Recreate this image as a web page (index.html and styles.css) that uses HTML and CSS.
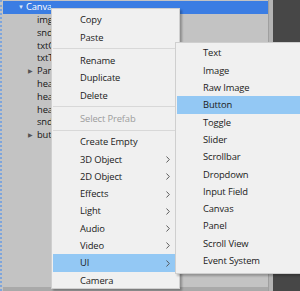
FILE: index.html
```html
<!DOCTYPE html>
<html>
<head>
<meta charset="utf-8">
<link rel="stylesheet" href="styles.css">
</head>
<body>
<div class="screen">
  <div class="hierarchy">
    <div class="tree">
      <div class="row selected"><span class="twisty down">&#9660;</span><span class="name">Canvas</span></div>
      <div class="row child"><span class="name">imgBackground</span></div>
      <div class="row child"><span class="name">sndClick</span></div>
      <div class="row child"><span class="name">txtCount</span></div>
      <div class="row child"><span class="name">txtTitle</span></div>
      <div class="row child"><span class="twisty right">&#9654;</span><span class="name">Panel</span></div>
      <div class="row child"><span class="name">heart1</span></div>
      <div class="row child"><span class="name">heart2</span></div>
      <div class="row child"><span class="name">heart3</span></div>
      <div class="row child"><span class="name">sndWin</span></div>
      <div class="row child"><span class="twisty right">&#9654;</span><span class="name">button</span></div>
    </div>
    <div class="bottom-strip"></div>
  </div>
  <div class="divider"></div>
  <div class="dark-panel"></div>

  <div class="menu main-menu">
    <div class="item">Copy</div>
    <div class="item">Paste</div>
    <div class="sep"></div>
    <div class="item">Rename</div>
    <div class="item">Duplicate</div>
    <div class="item">Delete</div>
    <div class="sep"></div>
    <div class="item disabled">Select Prefab</div>
    <div class="sep"></div>
    <div class="item">Create Empty</div>
    <div class="item">3D Object<svg class="chev" viewBox="0 0 4 7"><path d="M0.5 0.5 L3.3 3.5 L0.5 6.5" /></svg></div>
    <div class="item">2D Object<svg class="chev" viewBox="0 0 4 7"><path d="M0.5 0.5 L3.3 3.5 L0.5 6.5" /></svg></div>
    <div class="item">Effects<svg class="chev" viewBox="0 0 4 7"><path d="M0.5 0.5 L3.3 3.5 L0.5 6.5" /></svg></div>
    <div class="item">Light<svg class="chev" viewBox="0 0 4 7"><path d="M0.5 0.5 L3.3 3.5 L0.5 6.5" /></svg></div>
    <div class="item">Audio<svg class="chev" viewBox="0 0 4 7"><path d="M0.5 0.5 L3.3 3.5 L0.5 6.5" /></svg></div>
    <div class="item">Video<svg class="chev" viewBox="0 0 4 7"><path d="M0.5 0.5 L3.3 3.5 L0.5 6.5" /></svg></div>
    <div class="item active">UI<svg class="chev" viewBox="0 0 4 7"><path d="M0.5 0.5 L3.3 3.5 L0.5 6.5" /></svg></div>
    <div class="item">Camera</div>
  </div>

  <div class="menu sub-menu">
    <div class="item">Text</div>
    <div class="item">Image</div>
    <div class="item">Raw Image</div>
    <div class="item active">Button</div>
    <div class="item">Toggle</div>
    <div class="item">Slider</div>
    <div class="item">Scrollbar</div>
    <div class="item">Dropdown</div>
    <div class="item">Input Field</div>
    <div class="item">Canvas</div>
    <div class="item">Panel</div>
    <div class="item">Scroll View</div>
    <div class="item">Event System</div>
  </div>
</div>
</body>
</html>
```

FILE: styles.css
```css
html, body {
  margin: 0;
  padding: 0;
}

body {
  width: 300px;
  height: 291px;
  overflow: hidden;
  font-family: "Open Sans", "Noto Sans", sans-serif;
  font-size: 9.4px;
  letter-spacing: -0.12px;
  color: #1b1b1b;
}

.screen {
  position: relative;
  width: 300px;
  height: 291px;
  display: flex;
  background: #c3c3c3;
}

.hierarchy {
  width: 265px;
  height: 291px;
  display: flex;
  flex-direction: column;
  border-left: 2px dotted #7ea5dc;
  padding-left: 1px;
  background: #c3c3c3;
}

.tree {
  flex: 1;
  padding-top: 1px;
}

.row {
  height: 12.8px;
  line-height: 12.8px;
  display: flex;
  align-items: center;
  white-space: nowrap;
  color: #161616;
}

.row .name {
  overflow: hidden;
}

.row.selected {
  height: 13px;
  background: #3b7de3;
  color: #ffffff;
  padding-left: 15px;
}

.row.selected .name {
  max-width: 25px;
}

.row.child {
  padding-left: 34px;
}

.row.child .name {
  max-width: 14px;
}

.twisty {
  font-size: 6px;
  width: 8px;
  display: inline-block;
}

.twisty.down {
  color: #d8e6fb;
}

.twisty.right {
  color: #555;
  margin-left: -9px;
  width: 9px;
}

.bottom-strip {
  height: 4px;
  background: #a9a9a9;
}

.divider {
  width: 5px;
  height: 291px;
  background: #b4b4b4;
  border-left: 1px solid #9f9f9f;
  box-sizing: border-box;
}

.dark-panel {
  flex: 1;
  height: 291px;
  background: #474747;
}

.menu {
  position: absolute;
  background: #f0f0f0;
  border: 1px solid #cfcfcf;
  box-sizing: border-box;
}

.main-menu {
  left: 51px;
  top: 8px;
  width: 129px;
  height: 281px;
  padding-top: 2.35px;
  box-shadow: 2px 2px 2px rgba(0, 0, 0, 0.28);
}

.sub-menu {
  left: 175px;
  top: 42px;
  width: 128px;
  height: 232px;
  padding-top: 1.35px;
  box-shadow: 2px 2px 2px rgba(0, 0, 0, 0.25);
}

.item {
  height: 17.3px;
  display: flex;
  align-items: center;
  margin: 0 1px;
  white-space: nowrap;
  position: relative;
}

.main-menu .item {
  padding-left: 27px;
}

.sub-menu .item {
  padding-left: 26px;
}

.item.disabled {
  color: #9d9d9d;
}

.item.active {
  background: #93c8f4;
}

.sep {
  height: 6px;
  display: flex;
  align-items: center;
  margin: 0 1px;
}

.sep::before {
  content: "";
  flex: 1;
  height: 1px;
  background: #d8d8d8;
}

.chev {
  position: absolute;
  right: 8px;
  top: 5.5px;
  width: 4px;
  height: 7px;
  fill: none;
  stroke: #4d4d4d;
  stroke-width: 0.9;
}
```
